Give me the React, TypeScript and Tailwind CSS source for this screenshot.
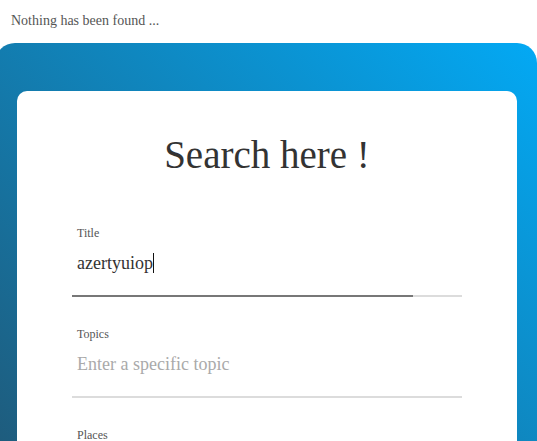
import { useState } from "react";

interface FieldProps {
  label: string;
  value?: string;
  placeholder?: string;
  focused?: boolean;
}

// champ avec label + soulignement
function Field({ label, value, placeholder, focused }: FieldProps) {
  return (
    <div className="w-[390px] mx-auto mb-[30px]">
      <div className="pl-[5px] text-[12px] leading-[14px] text-[#555] mb-[3px]">{label}</div>
      <div className="h-[40px] pl-[5px] flex items-center text-[18px]">
        {value ? (
          <>
            <span className="text-[#333]">{value}</span>
            <span className="w-px h-[20px] bg-[#111]" />
          </>
        ) : (
          <span className="text-[#aaa]">{placeholder}</span>
        )}
      </div>
      <div className="mt-[12px] flex h-[2px]">
        {focused && <div className="w-[341px] bg-[#777]" />}
        <div className="flex-1 bg-[#dcdcdc]" />
      </div>
    </div>
  );
}

export default function App() {
  const [title] = useState("azertyuiop");

  return (
    <div className="min-h-screen bg-white overflow-hidden font-[Liberation_Serif,Times_New_Roman,serif]">
      {/* message */}
      <p className="pt-[11px] pl-[11px] text-[14px] leading-[20px] text-[#555]">
        Nothing has been found ...
      </p>

      {/* conteneur dégradé */}
      <div className="mt-[12px] -ml-[5px] w-[calc(100%+5px)] rounded-t-[20px] bg-[linear-gradient(45deg,#1f5a7a,#03a9f4)] pt-[48px] pl-[22px] pr-[20px] h-[420px]">
        <div className="bg-white rounded-[10px] h-[400px] pt-[45px]">
          <h1 className="text-center text-[39px] leading-[38px] text-[#333] mb-[52px]">Search here !</h1>
          <Field label="Title" value={title} focused />
          <Field label="Topics" placeholder="Enter a specific topic" />
          <Field label="Places" placeholder="Enter a place" />
        </div>
      </div>
    </div>
  );
}
